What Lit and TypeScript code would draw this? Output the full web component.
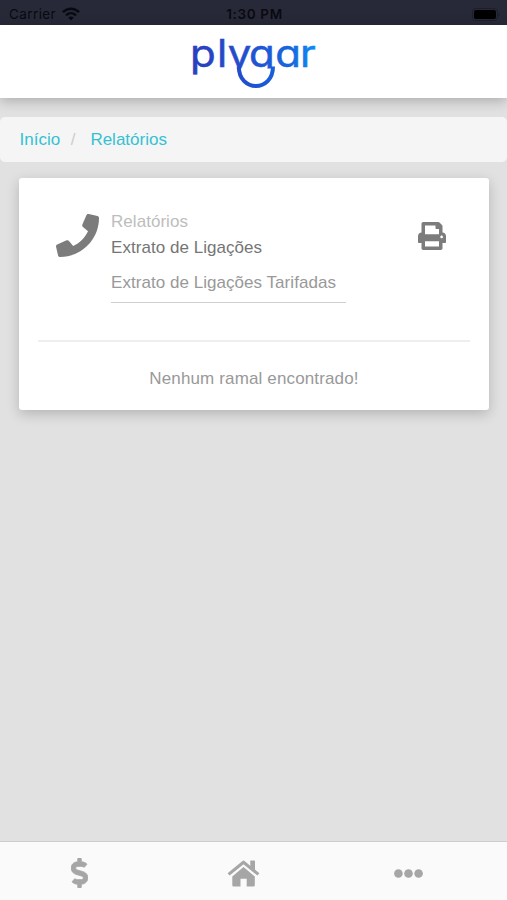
import { LitElement, html, css } from "lit";
import { customElement } from "lit/decorators.js";

@customElement("app-root")
export class AppRoot extends LitElement {
  static styles = css`
    :host {
      display: flex;
      flex-direction: column;
      height: 100vh;
      overflow: hidden;
      background: #e1e1e1;
      font-family: "Liberation Sans", Arial, sans-serif;
      font-size: 17px;
      line-height: 20px;
    }
    * { box-sizing: border-box; }
    svg { display: block; }
    .status {
      flex: none;
      height: 25px;
      display: grid;
      grid-template-columns: 1fr auto 1fr;
      align-items: center;
      padding: 3px 7px 0 9px;
      background: #282938;
      color: #090a10;
      font-family: Inter, sans-serif;
      font-size: 13.5px;
    }
    .carrier { display: flex; align-items: center; gap: 6px; letter-spacing: 0.4px; }
    .time { font-weight: 600; font-size: 13.5px; letter-spacing: 0.65px; }
    .battery { justify-self: end; }
    .header {
      flex: none;
      height: 73px;
      display: flex;
      justify-content: center;
      background: #fff;
      box-shadow: 0 3px 12px rgba(0, 0, 0, 0.24);
    }
    .wordmark {
      font-family: Inter, sans-serif;
      font-size: 37.5px;
      font-weight: 400;
      font-feature-settings: "cv11";
    }
    .crumbs {
      flex: none;
      display: flex;
      align-items: center;
      height: 45px;
      margin-top: 19px;
      padding: 0 19.5px;
      border-radius: 5px;
      background: #f5f5f5;
      color: #35c1d2;
    }
    .slash { color: #ccc; margin: 0 15px 0 10.5px; }
    .card {
      flex: none;
      height: 232px;
      margin: 16px 18px 0 19px;
      padding: 0 19px;
      border-radius: 3px;
      background: #fff;
      box-shadow: 0 4px 13px rgba(0, 0, 0, 0.2);
    }
    .top { display: flex; height: 162px; }
    .phone { margin: 36px 12px 0 18px; color: #7c7c7c; }
    .info { width: 235px; padding-top: 34px; letter-spacing: 0.045px; }
    .kind { color: #bdbdbd; }
    .title { color: #757575; margin-top: 6px; }
    .desc {
      color: #999;
      margin-top: 15px;
      height: 30px;
      border-bottom: 1px solid #cfcfcf;
    }
    .print { margin: 44px 0 0 72px; color: #7c7c7c; }
    .empty {
      border-top: 2px solid #eee;
      padding-top: 27px;
      text-align: center;
      color: #999;
      letter-spacing: 0.14px;
    }
    .tabs {
      flex: none;
      display: grid;
      grid-template-columns: 158px 170px 160px;
      place-items: center;
      height: 59px;
      margin-top: auto;
      padding-top: 4px;
      background: #fafafa;
      color: #a6a6a6;
      border-top: 1px solid #cdcdcd;
    }
  `;

  render() {
    return html`
      <div class="status">
        <div class="carrier">
          <span>Carrier</span>
          <svg width="18" height="14" viewBox="0 0 18 14" fill="none" stroke="currentColor" stroke-width="2.5">
            <path d="M.9 5.2C5.6.5 12.4.5 17.1 5.2M4 8.3c2.9-2.8 7.1-2.8 10 0" />
            <path d="M6.3 10.7c1.5-1.5 3.9-1.5 5.4 0L9 13.4z" fill="currentColor" stroke="none" />
          </svg>
        </div>
        <div class="time">1:30 PM</div>
        <svg class="battery" width="28" height="13" viewBox="0 0 28 13">
          <rect x=".5" y=".5" width="25" height="12" rx="3.5" fill="none" stroke="#1d1e2a" />
          <rect x="2" y="2" width="22" height="9" rx="2" fill="#000" />
          <path d="M26.5 4.5v4q1.3-.6 1.3-2t-1.3-2" fill="#1d1e2a" />
        </svg>
      </div>

      <div class="header">
        <svg width="130" height="66" viewBox="189 25 130 66">
          <defs>
            <linearGradient id="brand" gradientUnits="userSpaceOnUse" x1="193" y1="0" x2="316" y2="0">
              <stop offset="0" stop-color="#2940bd" />
              <stop offset=".45" stop-color="#2050cf" />
              <stop offset=".8" stop-color="#1668df" />
              <stop offset="1" stop-color="#108cf5" />
            </linearGradient>
            <linearGradient id="brand-text" gradientUnits="userSpaceOnUse" x1="172.3" y1="0" x2="282.1" y2="0">
              <stop offset="0" stop-color="#2940bd" />
              <stop offset=".45" stop-color="#2050cf" />
              <stop offset=".8" stop-color="#1668df" />
              <stop offset="1" stop-color="#108cf5" />
            </linearGradient>
            <clipPath id="above"><path d="M189 25h130v43.5H226V77h-37z" /></clipPath>
          </defs>
          <g clip-path="url(#above)">
            <text class="wordmark" transform="scale(1.12 1)" fill="url(#brand-text)" stroke="url(#brand-text)"
              stroke-width=".5" y="67" x="169.7 193.8 203.4 222.4 245.8 267.9">plygar</text>
          </g>
          <path d="M238.8 66.5C238.8 92.5 273 92.5 273 66.5" fill="none" stroke="url(#brand)" stroke-width="4" />
        </svg>
      </div>

      <div class="crumbs">
        <span>Início</span><span class="slash">/</span><span>Relatórios</span>
      </div>

      <div class="card">
        <div class="top">
          <svg class="phone" width="43" height="43" viewBox="0 0 512 512" fill="currentColor">
            <path d="M493.4 24.6l-104-24c-11.3-2.6-22.9 3.3-27.5 13.9l-48 112c-4.2 9.8-1.4 21.3 6.9 28l60.6 49.6c-36 76.7-98.9 140.5-177.2 177.2l-49.6-60.6c-6.8-8.3-18.2-11.1-28-6.9l-112 48C3.9 366.5-2 378.1.6 389.4l24 104C27.1 504.2 36.7 512 48 512c256.1 0 464-207.5 464-464 0-11.2-7.7-20.9-18.6-23.4z" />
          </svg>
          <div class="info">
            <div class="kind">Relatórios</div>
            <div class="title">Extrato de Ligações</div>
            <div class="desc">Extrato de Ligações Tarifadas</div>
          </div>
          <svg class="print" width="28" height="28" viewBox="0 0 512 512" fill="currentColor">
            <path d="M448 192V77.25c0-8.49-3.37-16.62-9.37-22.63L393.37 9.37c-6-6-14.14-9.37-22.63-9.37H96C78.33 0 64 14.33 64 32v160c-35.35 0-64 28.65-64 64v112c0 8.84 7.16 16 16 16h48v96c0 17.67 14.33 32 32 32h320c17.67 0 32-14.33 32-32v-96h48c8.84 0 16-7.16 16-16V256c0-35.35-28.65-64-64-64zm-64 256H128v-96h256v96zm0-224H128V64h192v48c0 8.84 7.16 16 16 16h48v96zm48 72c-13.25 0-24-10.75-24-24 0-13.26 10.75-24 24-24s24 10.74 24 24c0 13.25-10.75 24-24 24z" />
          </svg>
        </div>
        <div class="empty">Nenhum ramal encontrado!</div>
      </div>

      <div class="tabs">
        <svg width="17" height="30" viewBox="0 0 288 512" fill="currentColor">
          <path stroke="currentColor" stroke-width="12" d="M209.2 233.4l-108-31.6C88.7 198.2 80 186.5 80 173.5c0-16.3 13.2-29.5 29.5-29.5h66.3c12.2 0 24.2 3.7 34.2 10.5 6.1 4.1 14.3 3.1 19.5-2l34.8-34c7.1-6.9 6.1-18.4-1.8-24.5C238 74.8 207.4 64.1 176 64V16c0-8.8-7.2-16-16-16h-32c-8.8 0-16 7.2-16 16v48h-2.5C45.8 64-5.4 118.7.5 183.6c4.2 46.1 39.4 83.6 83.8 96.6l102.5 30c12.5 3.7 21.2 15.3 21.2 28.3 0 16.3-13.2 29.5-29.5 29.5h-66.3C100 368 88 364.3 78 357.5c-6.1-4.1-14.3-3.1-19.5 2l-34.8 34c-7.1 6.9-6.1 18.4 1.8 24.5 24.5 19.2 55.1 29.9 86.5 30v48c0 8.8 7.2 16 16 16h32c8.8 0 16-7.2 16-16v-48.2c46.6-.9 90.3-28.6 105.7-72.7 21.5-61.6-14.6-124.8-72.5-141.7z" />
        </svg>
        <svg width="33" height="27" viewBox="0 0 33 27" fill="currentColor">
          <path d="M16.5 7 27.8 16.5v8.8q0 1.2-1.2 1.2h-6.9v-7.7h-6.2v7.7H6.5q-1.2 0-1.2-1.2v-8.8z" />
          <path d="M1.6 14.4 16.5 2.2l14.9 12.2" fill="none" stroke="currentColor" stroke-width="3.1" stroke-linejoin="round" />
          <path d="M23.3 1.2q0-.6.6-.6h3.5q.6 0 .6.6v10l-4.7-3.9z" />
        </svg>
        <svg width="29" height="9" viewBox="0 0 29 9" fill="currentColor">
          <circle cx="4.4" cy="4.5" r="4.3" /><circle cx="14.5" cy="4.5" r="4.3" /><circle cx="24.6" cy="4.5" r="4.3" />
        </svg>
      </div>
    `;
  }
}
